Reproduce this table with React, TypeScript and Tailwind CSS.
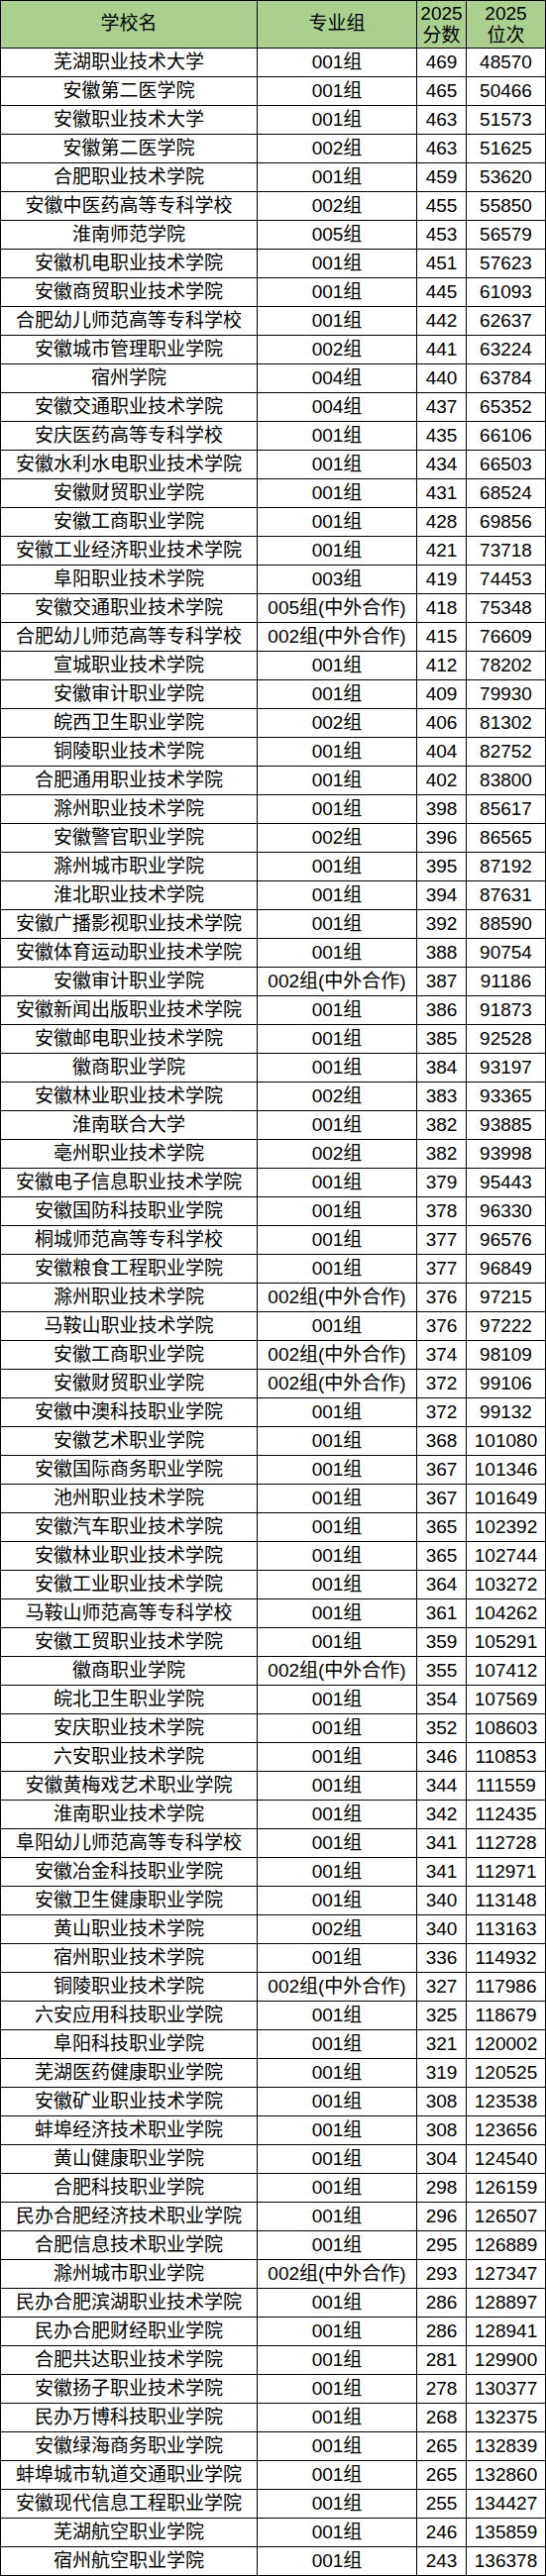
const rows: [string, string, number, number][] = [
  ["芜湖职业技术大学", "001组", 469, 48570],
  ["安徽第二医学院", "001组", 465, 50466],
  ["安徽职业技术大学", "001组", 463, 51573],
  ["安徽第二医学院", "002组", 463, 51625],
  ["合肥职业技术学院", "001组", 459, 53620],
  ["安徽中医药高等专科学校", "002组", 455, 55850],
  ["淮南师范学院", "005组", 453, 56579],
  ["安徽机电职业技术学院", "001组", 451, 57623],
  ["安徽商贸职业技术学院", "001组", 445, 61093],
  ["合肥幼儿师范高等专科学校", "001组", 442, 62637],
  ["安徽城市管理职业学院", "002组", 441, 63224],
  ["宿州学院", "004组", 440, 63784],
  ["安徽交通职业技术学院", "004组", 437, 65352],
  ["安庆医药高等专科学校", "001组", 435, 66106],
  ["安徽水利水电职业技术学院", "001组", 434, 66503],
  ["安徽财贸职业学院", "001组", 431, 68524],
  ["安徽工商职业学院", "001组", 428, 69856],
  ["安徽工业经济职业技术学院", "001组", 421, 73718],
  ["阜阳职业技术学院", "003组", 419, 74453],
  ["安徽交通职业技术学院", "005组(中外合作)", 418, 75348],
  ["合肥幼儿师范高等专科学校", "002组(中外合作)", 415, 76609],
  ["宣城职业技术学院", "001组", 412, 78202],
  ["安徽审计职业学院", "001组", 409, 79930],
  ["皖西卫生职业学院", "002组", 406, 81302],
  ["铜陵职业技术学院", "001组", 404, 82752],
  ["合肥通用职业技术学院", "001组", 402, 83800],
  ["滁州职业技术学院", "001组", 398, 85617],
  ["安徽警官职业学院", "002组", 396, 86565],
  ["滁州城市职业学院", "001组", 395, 87192],
  ["淮北职业技术学院", "001组", 394, 87631],
  ["安徽广播影视职业技术学院", "001组", 392, 88590],
  ["安徽体育运动职业技术学院", "001组", 388, 90754],
  ["安徽审计职业学院", "002组(中外合作)", 387, 91186],
  ["安徽新闻出版职业技术学院", "001组", 386, 91873],
  ["安徽邮电职业技术学院", "001组", 385, 92528],
  ["徽商职业学院", "001组", 384, 93197],
  ["安徽林业职业技术学院", "002组", 383, 93365],
  ["淮南联合大学", "001组", 382, 93885],
  ["亳州职业技术学院", "002组", 382, 93998],
  ["安徽电子信息职业技术学院", "001组", 379, 95443],
  ["安徽国防科技职业学院", "001组", 378, 96330],
  ["桐城师范高等专科学校", "001组", 377, 96576],
  ["安徽粮食工程职业学院", "001组", 377, 96849],
  ["滁州职业技术学院", "002组(中外合作)", 376, 97215],
  ["马鞍山职业技术学院", "001组", 376, 97222],
  ["安徽工商职业学院", "002组(中外合作)", 374, 98109],
  ["安徽财贸职业学院", "002组(中外合作)", 372, 99106],
  ["安徽中澳科技职业学院", "001组", 372, 99132],
  ["安徽艺术职业学院", "001组", 368, 101080],
  ["安徽国际商务职业学院", "001组", 367, 101346],
  ["池州职业技术学院", "001组", 367, 101649],
  ["安徽汽车职业技术学院", "001组", 365, 102392],
  ["安徽林业职业技术学院", "001组", 365, 102744],
  ["安徽工业职业技术学院", "001组", 364, 103272],
  ["马鞍山师范高等专科学校", "001组", 361, 104262],
  ["安徽工贸职业技术学院", "001组", 359, 105291],
  ["徽商职业学院", "002组(中外合作)", 355, 107412],
  ["皖北卫生职业学院", "001组", 354, 107569],
  ["安庆职业技术学院", "001组", 352, 108603],
  ["六安职业技术学院", "001组", 346, 110853],
  ["安徽黄梅戏艺术职业学院", "001组", 344, 111559],
  ["淮南职业技术学院", "001组", 342, 112435],
  ["阜阳幼儿师范高等专科学校", "001组", 341, 112728],
  ["安徽冶金科技职业学院", "001组", 341, 112971],
  ["安徽卫生健康职业学院", "001组", 340, 113148],
  ["黄山职业技术学院", "002组", 340, 113163],
  ["宿州职业技术学院", "001组", 336, 114932],
  ["铜陵职业技术学院", "002组(中外合作)", 327, 117986],
  ["六安应用科技职业学院", "001组", 325, 118679],
  ["阜阳科技职业学院", "001组", 321, 120002],
  ["芜湖医药健康职业学院", "001组", 319, 120525],
  ["安徽矿业职业技术学院", "001组", 308, 123538],
  ["蚌埠经济技术职业学院", "001组", 308, 123656],
  ["黄山健康职业学院", "001组", 304, 124540],
  ["合肥科技职业学院", "001组", 298, 126159],
  ["民办合肥经济技术职业学院", "001组", 296, 126507],
  ["合肥信息技术职业学院", "001组", 295, 126889],
  ["滁州城市职业学院", "002组(中外合作)", 293, 127347],
  ["民办合肥滨湖职业技术学院", "001组", 286, 128897],
  ["民办合肥财经职业学院", "001组", 286, 128941],
  ["合肥共达职业技术学院", "001组", 281, 129900],
  ["安徽扬子职业技术学院", "001组", 278, 130377],
  ["民办万博科技职业学院", "001组", 268, 132375],
  ["安徽绿海商务职业学院", "001组", 265, 132839],
  ["蚌埠城市轨道交通职业学院", "001组", 265, 132860],
  ["安徽现代信息工程职业学院", "001组", 255, 134427],
  ["芜湖航空职业学院", "001组", 246, 135859],
  ["宿州航空职业学院", "001组", 243, 136378],
];

const cell = "flex items-center justify-center border-r border-b border-black whitespace-nowrap";

const App = () => {
  return (
    <div className="w-[551px] bg-white text-black text-[19px] font-['Liberation_Sans','Noto_Sans_CJK_SC',sans-serif]">
      <div className="border-t border-l border-black">
        {/* header */}
        <div className="flex h-[48px] bg-[#a9d08e]">
          <div className={`${cell} w-[259px]`}>学校名</div>
          <div className={`${cell} w-[161px]`}>专业组</div>
          <div className={`${cell} w-[50px] flex-col leading-[22px]`}>
            <span>2025</span>
            <span>分数</span>
          </div>
          <div className={`${cell} w-[80px] flex-col leading-[22px]`}>
            <span>2025</span>
            <span>位次</span>
          </div>
        </div>
        {rows.map(([school, group, score, rank], i) => (
          <div key={i} className="flex h-[29px]">
            <div className={`${cell} w-[259px]`}>{school}</div>
            <div className={`${cell} w-[161px]`}>{group}</div>
            <div className={`${cell} w-[50px]`}>{score}</div>
            <div className={`${cell} w-[80px]`}>{rank}</div>
          </div>
        ))}
      </div>
    </div>
  );
};

export default App;
